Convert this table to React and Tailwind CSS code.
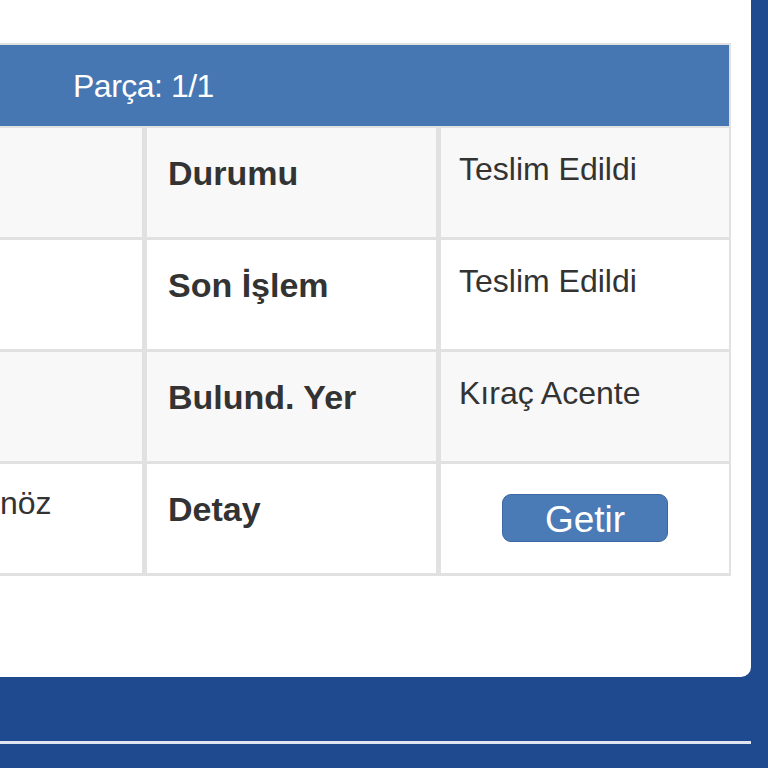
import React from "react";

const rows = [
  { left: "", label: "Durumu", value: "Teslim Edildi", alt: true },
  { left: "", label: "Son İşlem", value: "Teslim Edildi", alt: false },
  { left: "", label: "Bulund. Yer", value: "Kıraç Acente", alt: true },
  { left: "nöz", label: "Detay", value: null, alt: false },
];

export default function App() {
  return (
    <div
      className="h-[768px] w-[768px] overflow-hidden bg-[#1f4a8f]"
      style={{ fontFamily: '"Liberation Sans", Arial, sans-serif' }}
    >
      {/* white card */}
      <div className="h-[677px] w-[751px] overflow-hidden rounded-br-[10px] bg-white pt-[43px]">
        <div className="-ml-[160px] w-[891px] bg-[#e1e1e1] px-[2px] pt-[2px] pb-[3px]">
          {/* header */}
          <div className="flex h-[81px] items-center bg-[#4677b2] pl-[231px]">
            <span className="text-[32px] leading-none tracking-[-0.5px] text-white">
              Parça: 1/1
            </span>
          </div>

          {/* rows */}
          <div className="mt-[2px] flex flex-col gap-[3px]">
            {rows.map((r) => (
              <div
                key={r.label}
                className="grid h-[109px] grid-cols-[300px_289px_288px] gap-x-[5px]"
              >
                <div
                  className={`pl-[158px] pt-[20px] text-[32px] leading-[38px] text-[#333] ${
                    r.alt ? "bg-[#f8f8f8]" : "bg-white"
                  }`}
                >
                  {r.left}
                </div>
                <div
                  className={`pl-[21px] pt-[25px] text-[34px] font-bold leading-[40px] text-[#333] ${
                    r.alt ? "bg-[#f8f8f8]" : "bg-white"
                  }`}
                >
                  {r.label}
                </div>
                <div
                  className={`text-[32px] leading-[38px] text-[#333] ${
                    r.alt ? "bg-[#f8f8f8]" : "bg-white"
                  } ${r.value ? "pl-[18px] pt-[22px]" : "flex justify-center pt-[30px]"}`}
                >
                  {r.value ?? (
                    <button className="flex h-[48px] w-[166px] items-center justify-center rounded-[9px] border border-[#3b67a2] bg-[#4a7bb6] pt-[2px] text-[37px] leading-none text-white">
                      Getir
                    </button>
                  )}
                </div>
              </div>
            ))}
          </div>
        </div>
      </div>

      {/* bottom divider */}
      <div className="mt-[64px] h-[3px] w-[751px] bg-[#dfe6f2]" />
    </div>
  );
}
